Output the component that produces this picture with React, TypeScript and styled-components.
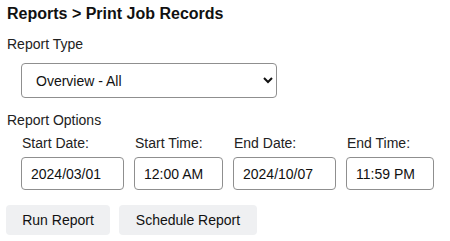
import React from 'react'
import styled, { createGlobalStyle } from 'styled-components'

const GlobalStyle = createGlobalStyle`
	body {
		margin: 0;
		background: #fff;
		font-family: "Liberation Sans", Arial, sans-serif;
		color: #111;
	}
`

const Page = styled.div`
	display: flex;
	flex-direction: column;
	padding: 4px 0 0 7px;
`

const Title = styled.h1`
	margin: 0;
	font-size: 16px;
	line-height: 19px;
	font-weight: 700;
	color: #111;
`

const SectionLabel = styled.div<{ $top: number }>`
	margin-top: ${(p) => p.$top}px;
	font-size: 14px;
	line-height: 16px;
	color: #222;
`

const Indent = styled.div`
	padding-left: 14px;
`

const Select = styled.select`
	display: block;
	margin-top: 11px;
	width: 256px;
	height: 35px;
	padding: 0 10px;
	border: 1px solid #8f8f8f;
	border-radius: 4px;
	background: #fff;
	font-family: inherit;
	font-size: 14px;
	color: #111;
`

const FieldRow = styled.div`
	display: flex;
	gap: 10px;
	margin-top: 7px;
`

const Field = styled.label<{ $w: number }>`
	display: flex;
	flex-direction: column;
	gap: 6px;
	width: ${(p) => p.$w}px;
	flex: none;
`

const FieldLabel = styled.span`
	padding-left: 1px;
	font-size: 14px;
	line-height: 16px;
	color: #222;
	white-space: nowrap;
`

const TextInput = styled.input`
	box-sizing: border-box;
	width: 100%;
	height: 33px;
	margin: 0;
	padding: 0 9px;
	border: 1px solid #8f8f8f;
	border-radius: 4px;
	font-family: inherit;
	font-size: 14px;
	color: #111;
	outline: none;
`

const ButtonRow = styled.div`
	display: flex;
	gap: 9px;
	margin-top: 15px;
	margin-left: -1px;
`

const Button = styled.button<{ $w: number }>`
	width: ${(p) => p.$w}px;
	height: 30px;
	border: none;
	border-radius: 4px;
	background: #eff0f2;
	font-family: inherit;
	font-size: 14px;
	color: #111;
	cursor: pointer;
`

const fields = [
	{ label: 'Start Date:', value: '2024/03/01', w: 103 },
	{ label: 'Start Time:', value: '12:00 AM', w: 89 },
	{ label: 'End Date:', value: '2024/10/07', w: 103 },
	{ label: 'End Time:', value: '11:59 PM', w: 88 },
]

const App = () => {
	return (
		<>
			<GlobalStyle />
			<Page>
				<Title>Reports &gt; Print Job Records</Title>
				<SectionLabel $top={13}>Report Type</SectionLabel>
				<Indent>
					<Select defaultValue="overview-all">
						<option value="overview-all">Overview - All</option>
					</Select>
				</Indent>
				<SectionLabel $top={14}>Report Options</SectionLabel>
				<Indent>
					<FieldRow>
						{fields.map((f) => (
							<Field key={f.label} $w={f.w}>
								<FieldLabel>{f.label}</FieldLabel>
								<TextInput defaultValue={f.value} />
							</Field>
						))}
					</FieldRow>
				</Indent>
				<ButtonRow>
					<Button $w={104}>Run Report</Button>
					<Button $w={138}>Schedule Report</Button>
				</ButtonRow>
			</Page>
		</>
	)
}
export default App
